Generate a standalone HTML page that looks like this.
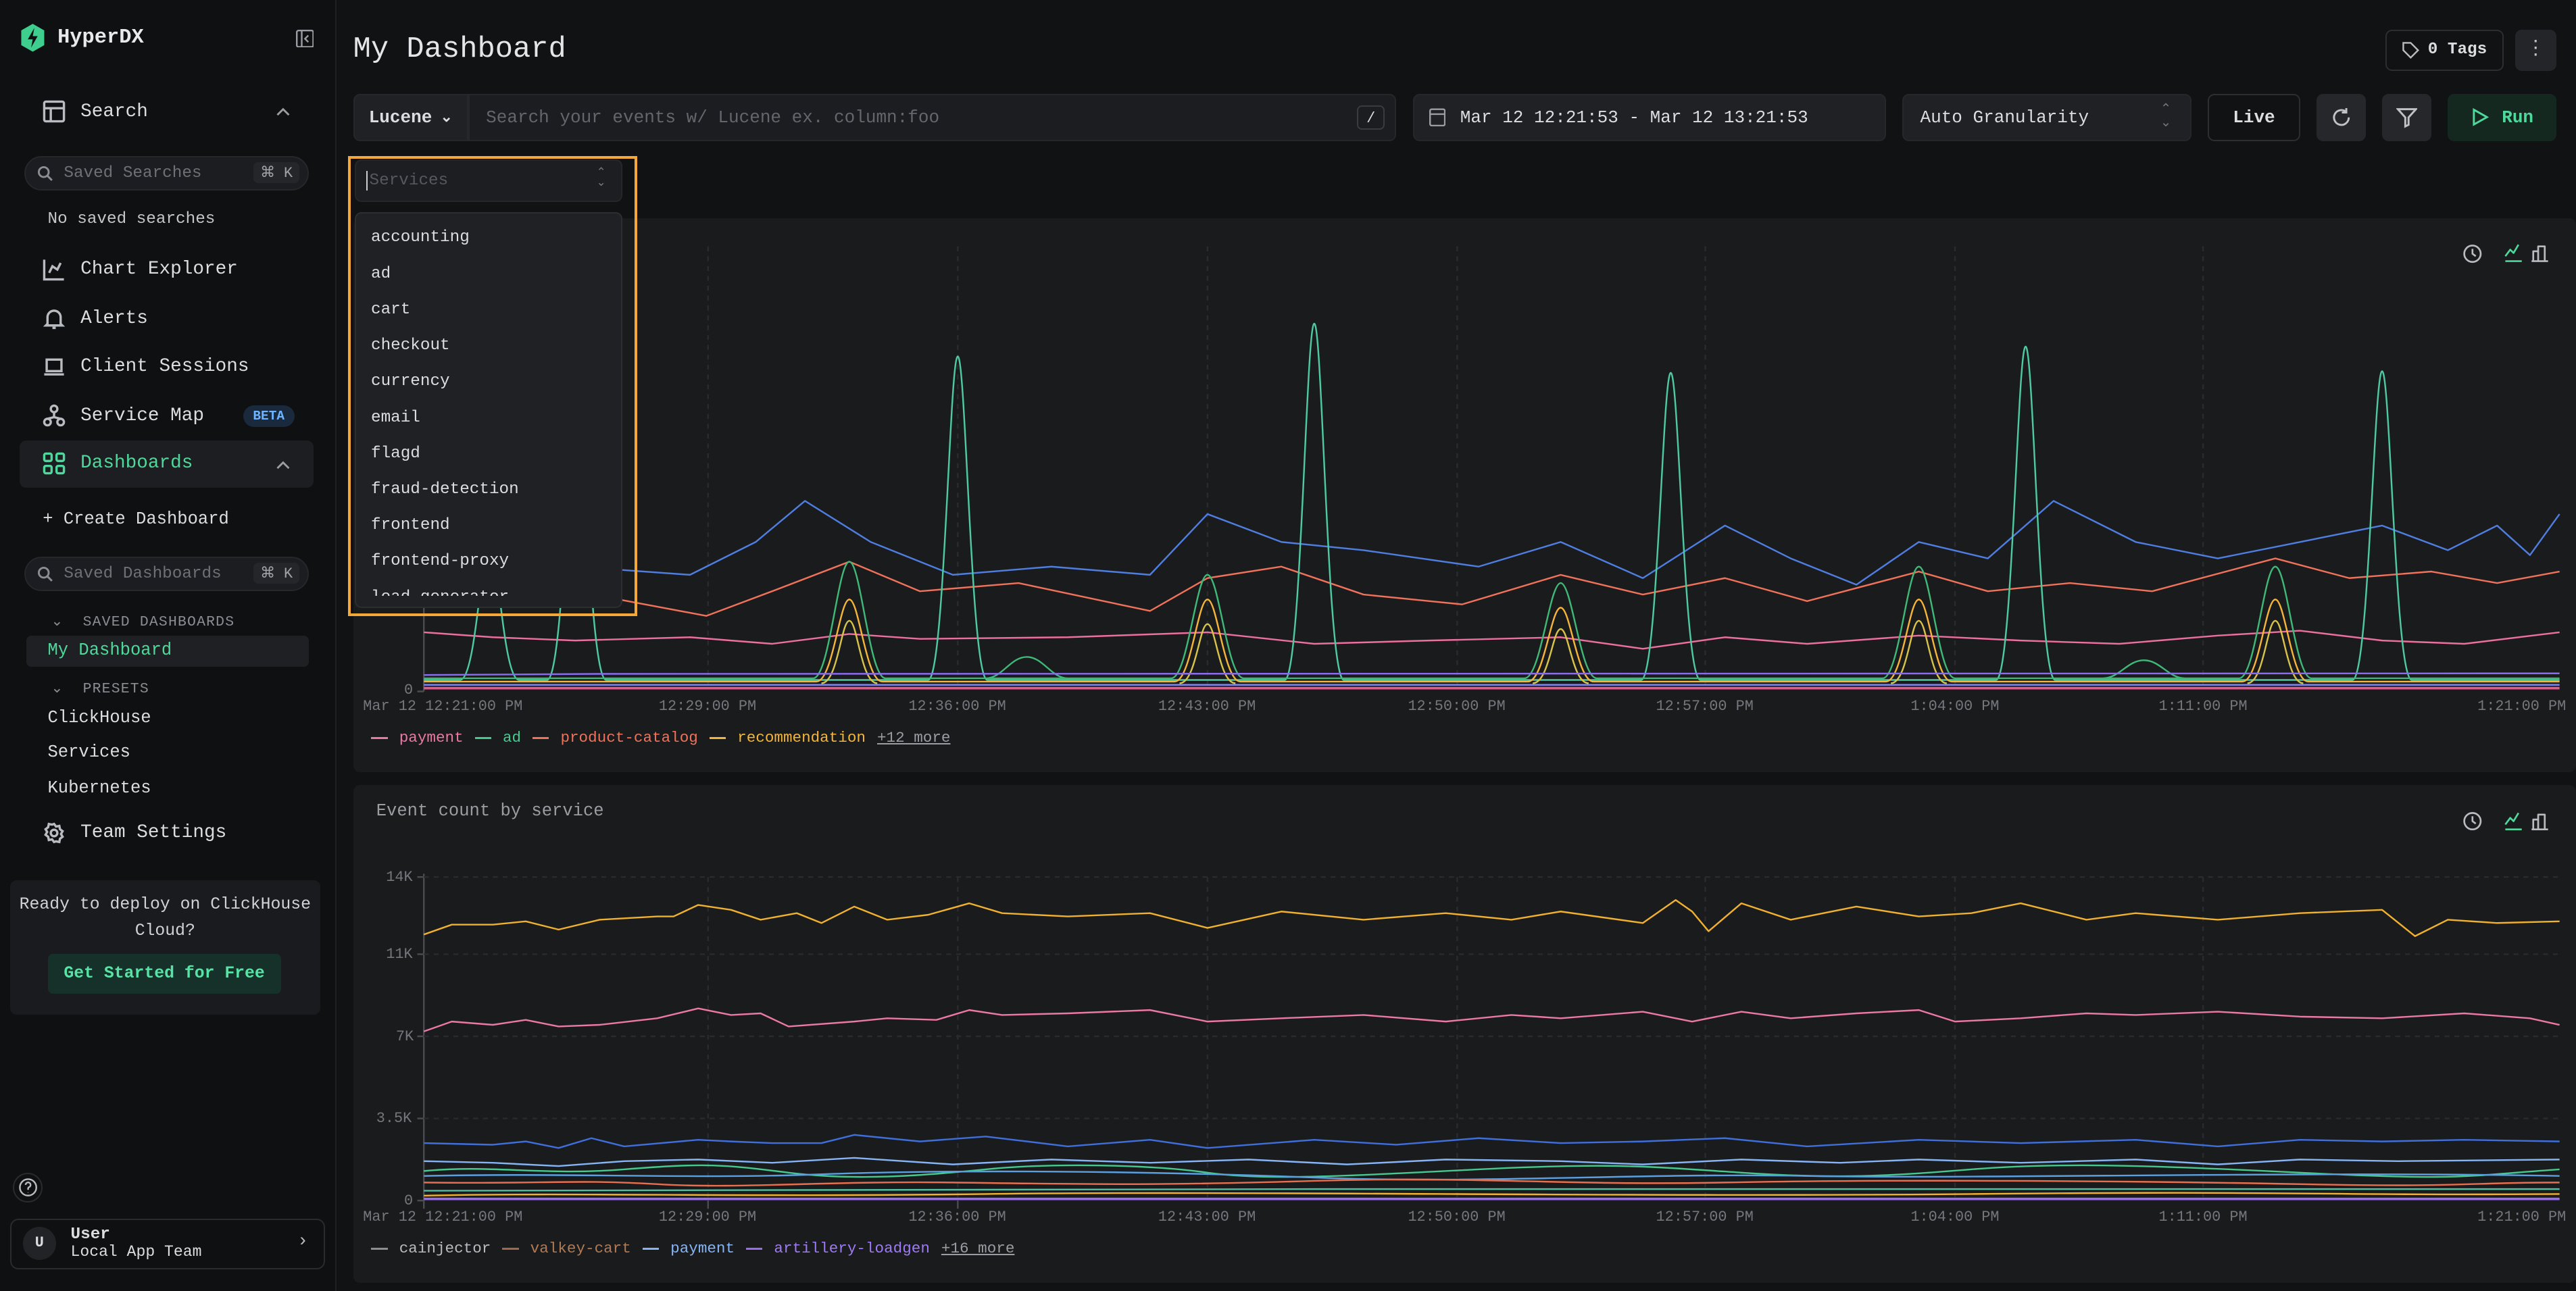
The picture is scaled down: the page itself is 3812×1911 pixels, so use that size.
<!DOCTYPE html>
<html><head><meta charset="utf-8"><style>
html,body{margin:0;padding:0;background:#111214;}
body{zoom:2.4311;width:1568px;height:786px;position:relative;overflow:hidden;font-family:"Liberation Mono",monospace;color:#dcdde0;}
.a{position:absolute;white-space:nowrap;}
.side{position:absolute;left:0;top:0;width:204px;height:786px;background:#0f1012;border-right:1px solid #1f2023;}
.nav{position:absolute;left:26px;font-size:11.4px;color:#dcdde0;display:flex;align-items:center;gap:9px;}
.ic{width:14px;height:14px;stroke:#b8bbc0;fill:none;stroke-width:1.4}
.pill{position:absolute;left:15px;width:173px;height:21px;border-radius:11px;background:#1c1d20;border:1px solid #26272b;box-sizing:border-box;font-size:10px;color:#6d7076;}
.kbd{position:absolute;right:5px;top:3px;background:#25262a;border-radius:3px;font-size:9px;padding:1px 4px;color:#a0a3a8}
.small{font-size:10.5px;color:#dcdde0;}
.btn{position:absolute;top:57px;height:29px;border-radius:4px;background:#202124;border:1px solid #26272b;box-sizing:border-box;font-size:10.7px;display:flex;align-items:center;justify-content:center;}
.panel{position:absolute;left:215px;width:1353px;background:#1a1b1d;border-radius:4px;}
.lbl{position:absolute;font-size:9px;color:#74777c;}
.leg{position:absolute;left:226px;font-size:9.3px;display:flex;align-items:center;}
.leg i{display:inline-block;width:10px;height:1.5px;margin:0 7px 0 0;}
.leg span{margin-right:7px}
</style></head><body>

<div class="side">
  <svg class="a" style="left:12px;top:14px" width="16" height="18" viewBox="0 0 16 18"><path d="M8 0.5 L15 4.5 L15 13.5 L8 17.5 L1 13.5 L1 4.5Z" fill="#3ecf8e"/><path d="M9 3 L5 10 L8 10 L7 15 L11 8 L8 8Z" fill="#0f1012"/></svg>
  <div class="a" style="left:35px;top:16px;font-size:12.5px;font-weight:bold;color:#e8e9eb">HyperDX</div>
  <svg class="a" style="left:180px;top:18px" width="11" height="11" viewBox="0 0 11 11"><rect x="0.5" y="0.5" width="10" height="10" rx="1" fill="none" stroke="#9a9da2"/><path d="M3.5 0.5 V10.5 M7.5 3.5 L5.5 5.5 L7.5 7.5" stroke="#9a9da2" fill="none"/></svg>

  <div class="nav" style="top:61px"><svg class="ic" viewBox="0 0 14 14"><rect x="1" y="1" width="12" height="12" rx="1"/><path d="M1 5H13M5 5V13"/></svg>Search</div>
  <svg class="a" style="left:168px;top:65px" width="9" height="6" viewBox="0 0 9 6"><path d="M1 5L4.5 1.5L8 5" stroke="#9a9da2" fill="none" stroke-width="1.2"/></svg>
  <div class="pill" style="top:95px"><svg class="a" style="left:7px;top:5px" width="10" height="10" viewBox="0 0 10 10"><circle cx="4" cy="4" r="3" fill="none" stroke="#8a8d93" stroke-width="1.2"/><path d="M6.3 6.3L9 9" stroke="#8a8d93" stroke-width="1.2"/></svg><span class="a" style="left:23px;top:4px">Saved Searches</span><span class="kbd">⌘ K</span></div>
  <div class="a" style="left:29px;top:128px;font-size:10px;color:#c4c6ca">No saved searches</div>

  <div class="nav" style="top:157px"><svg class="ic" viewBox="0 0 14 14"><path d="M1 1V13H13M4 9L6 5L9 7L11 3"/></svg>Chart Explorer</div>
  <div class="nav" style="top:187px"><svg class="ic" viewBox="0 0 14 14"><path d="M3 10V6a4 4 0 0 1 8 0v4l1 1H2z M6 12.5h2"/></svg>Alerts</div>
  <div class="nav" style="top:216px"><svg class="ic" viewBox="0 0 14 14"><rect x="2.5" y="3" width="9" height="7"/><path d="M1 12H13"/></svg>Client Sessions</div>
  <div class="nav" style="top:246px"><svg class="ic" viewBox="0 0 14 14"><circle cx="7" cy="3" r="2"/><circle cx="3" cy="11" r="2"/><circle cx="11" cy="11" r="2"/><path d="M7 5V8M3 9L7 8L11 9"/></svg>Service Map</div>
  <div class="a" style="left:148px;top:247px;background:#1a2a3c;color:#6cb4ff;font-size:8px;font-weight:bold;padding:2px 6px;border-radius:8px">BETA</div>
  <div class="a" style="left:12px;top:268px;width:179px;height:29px;background:#1d1e21;border-radius:4px"></div>
  <div class="nav" style="top:275px;color:#4fd89c"><svg class="ic" viewBox="0 0 14 14" style="stroke:#4fd89c"><rect x="1" y="1" width="4.5" height="4.5" rx="1"/><rect x="8.5" y="1" width="4.5" height="4.5" rx="1"/><rect x="1" y="8.5" width="4.5" height="4.5" rx="1"/><rect x="8.5" y="8.5" width="4.5" height="4.5" rx="1"/></svg>Dashboards</div>
  <svg class="a" style="left:168px;top:280px" width="9" height="6" viewBox="0 0 9 6"><path d="M1 5L4.5 1.5L8 5" stroke="#9a9da2" fill="none" stroke-width="1.2"/></svg>
  <div class="a small" style="left:26px;top:310px">+ Create Dashboard</div>
  <div class="pill" style="top:339px"><svg class="a" style="left:7px;top:5px" width="10" height="10" viewBox="0 0 10 10"><circle cx="4" cy="4" r="3" fill="none" stroke="#8a8d93" stroke-width="1.2"/><path d="M6.3 6.3L9 9" stroke="#8a8d93" stroke-width="1.2"/></svg><span class="a" style="left:23px;top:4px">Saved Dashboards</span><span class="kbd">⌘ K</span></div>
  <div class="a" style="left:31px;top:373px;font-size:8.8px;color:#8a8d93;letter-spacing:0.5px">⌄&nbsp; SAVED DASHBOARDS</div>
  <div class="a" style="left:16px;top:387px;width:172px;height:19px;background:#1f2023;border-radius:3px"></div>
  <div class="a small" style="left:29px;top:390px;color:#4fd89c">My Dashboard</div>
  <div class="a" style="left:31px;top:414px;font-size:8.8px;color:#8a8d93;letter-spacing:0.5px">⌄&nbsp; PRESETS</div>
  <div class="a small" style="left:29px;top:431px">ClickHouse</div>
  <div class="a small" style="left:29px;top:452px">Services</div>
  <div class="a small" style="left:29px;top:474px">Kubernetes</div>
  <div class="nav" style="top:500px"><svg class="ic" viewBox="0 0 14 14"><circle cx="7" cy="7" r="2"/><path d="M7 1.5l1.2 1.6 2-.4.4 2 1.6 1.2-1 1.7 1 1.7-1.6 1.2-.4 2-2-.4L7 12.5l-1.2-1.6-2 .4-.4-2L1.8 8.1l1-1.7-1-1.7 1.6-1.2.4-2 2 .4z"/></svg>Team Settings</div>

  <div class="a" style="left:6px;top:536px;width:189px;height:82px;background:#1a1b1e;border-radius:4px"></div>
  <div class="a" style="left:6px;top:543px;width:189px;text-align:center;font-size:10.2px;line-height:16px;white-space:normal;color:#d0d2d6">Ready to deploy on ClickHouse Cloud?</div>
  <div class="a" style="left:29px;top:581px;width:142px;height:24px;background:#16302a;border-radius:3px;color:#57e3a5;font-weight:bold;font-size:10.2px;text-align:center;line-height:24px">Get Started for Free</div>

  <div class="a" style="left:8px;top:714px;width:18px;height:18px;border-radius:50%;border:1px solid #2a2b2f;box-sizing:border-box"></div>
  <svg class="a" style="left:11px;top:717px" width="12" height="12" viewBox="0 0 12 12"><circle cx="6" cy="6" r="5" fill="none" stroke="#b8bbc0"/><path d="M4.5 4.5a1.5 1.5 0 1 1 2 1.4c-.4.2-.5.5-.5 1V7.5M6 9v.2" fill="none" stroke="#b8bbc0"/></svg>
  <div class="a" style="left:6px;top:742px;width:192px;height:31px;border:1px solid #2a2b2f;border-radius:5px;box-sizing:border-box"></div>
  <div class="a" style="left:14px;top:747px;width:20px;height:20px;border-radius:50%;background:#222326;font-size:9px;font-weight:bold;text-align:center;line-height:20px">U</div>
  <div class="a" style="left:43px;top:746px;font-size:10px;font-weight:bold">User</div>
  <div class="a" style="left:43px;top:757px;font-size:9.5px">Local App Team</div>
  <div class="a" style="left:181px;top:750px;font-size:11px;color:#b8bbc0">›</div>
</div>

<!-- header -->
<div class="a" style="left:215px;top:20px;font-size:18px;color:#e4e5e8">My Dashboard</div>
<div class="a" style="left:1452px;top:18px;width:72px;height:25px;border:1px solid #2d2e32;border-radius:4px;box-sizing:border-box;font-size:10px;font-weight:bold;line-height:23px;padding-left:25px">0 Tags</div>
<svg class="a" style="left:1462px;top:25px" width="11" height="11" viewBox="0 0 11 11"><path d="M1 1H5.5L10 5.5L5.5 10L1 5.5Z" fill="none" stroke="#b8bbc0"/></svg>
<div class="a" style="left:1531px;top:18px;width:25px;height:25px;background:#242528;border-radius:4px;text-align:center;font-size:12px;line-height:24px;color:#c0c2c6">⋮</div>

<div class="btn" style="left:215px;width:70px;font-weight:bold;border-radius:4px 0 0 4px">Lucene <span style="font-size:9px;margin-left:5px">⌄</span></div>
<div class="btn" style="left:285px;width:565px;justify-content:flex-start;padding-left:10px;color:#63666c;border-radius:0 4px 4px 0;background:#1c1d20">Search your events w/ Lucene ex. column:foo</div>
<div class="a" style="left:826px;top:64px;width:17px;height:15px;border:1px solid #3a3b3f;border-radius:3px;font-size:9px;text-align:center;line-height:15px;box-sizing:border-box">/</div>
<div class="btn" style="left:860px;width:288px;justify-content:flex-start;padding-left:28px">Mar 12 12:21:53 - Mar 12 13:21:53</div>
<svg class="a" style="left:870px;top:65px" width="10" height="12" viewBox="0 0 10 12"><rect x="0.5" y="1.5" width="9" height="10" rx="1" fill="none" stroke="#9a9da2"/><path d="M0.5 4.5H9.5" stroke="#9a9da2"/></svg>
<div class="btn" style="left:1158px;width:176px;justify-content:flex-start;padding-left:10px">Auto Granularity</div>
<div class="a" style="left:1315px;top:63px;font-size:8px;color:#74777c;line-height:8px">⌃<br>⌄</div>
<div class="btn" style="left:1344px;width:56px;background:#111214;border-color:#2d2e32;font-weight:bold">Live</div>
<div class="btn" style="left:1410px;width:30px;background:#26272a"><svg width="13" height="13" viewBox="0 0 13 13"><path d="M11 6.5A4.5 4.5 0 1 1 9.5 3.2M9.5 0.8V3.5H6.8" fill="none" stroke="#c0c2c6" stroke-width="1.2"/></svg></div>
<div class="btn" style="left:1450px;width:30px;background:#26272a"><svg width="13" height="13" viewBox="0 0 13 13"><path d="M1 1.5H12L7.5 6.5V11L5.5 12V6.5Z" fill="none" stroke="#c0c2c6" stroke-width="1.2"/></svg></div>
<div class="btn" style="left:1490px;width:66px;background:#15281f;border-color:#15281f;color:#4fd89c;font-weight:bold"><svg width="11" height="11" viewBox="0 0 11 11" style="margin-right:8px"><path d="M2 1L10 5.5L2 10Z" fill="none" stroke="#4fd89c" stroke-width="1.2"/></svg>Run</div>

<!-- panels -->
<div class="panel" style="top:133px;height:337px"></div>
<div class="panel" style="top:478px;height:303px"></div>
<div class="a" style="left:229px;top:143px;font-size:10.5px;color:#9a9da2">Event count by service</div>
<div class="a" style="left:229px;top:488px;font-size:10.5px;color:#9a9da2">Event count by service</div>

<svg class="a" style="left:0;top:0" width="1568" height="786" viewBox="0 0 1568 786" fill="none" stroke-linejoin="round">
  <g stroke="#b8bbc0" stroke-width="1.1">
    <circle cx="1505" cy="154.5" r="5"/><path d="M1505 151.5V154.5L1507 156"/>
    <circle cx="1505" cy="500" r="5"/><path d="M1505 497V500L1507 501.5"/>
    <path d="M1542 159V153H1545V159M1545 159V150H1549V159M1541 159H1551"/>
    <path d="M1542 505V499H1545V505M1545 505V496H1549V505M1541 505H1551"/>
  </g>
  <g stroke="#4fd89c" stroke-width="1.1"><path d="M1525 156L1528 152L1530 154L1533 149M1525 159H1535"/><path d="M1525 502L1528 498L1530 500L1533 495M1525 505H1535"/></g>
  <path d="M258 145V421M254 421H258" stroke="#4a4c50"/>
  <g stroke="#2a2b2e" stroke-dasharray="3 3"><path d="M431 150V420M583 150V420M735 150V420M887 150V420M1038 150V420M1190 150V420M1341 150V420"/></g>
  <polyline stroke="#4f7ee0" stroke-width="1" points="258,335 300,328 350,345 420,350 460,330 490,305 530,330 580,350 640,345 700,350 735,313 780,330 830,335 900,345 950,330 1000,352 1050,320 1090,340 1130,356 1168,330 1210,340 1250,305 1300,330 1350,340 1400,330 1450,320 1490,335 1520,320 1540,338 1558,313"/>
  <polyline stroke="#f0725a" stroke-width="1" points="258,355 300,345 350,360 430,375 470,360 517,342 560,360 620,355 700,372 735,352 780,345 830,362 890,368 950,350 1000,362 1050,352 1100,366 1168,348 1210,360 1260,355 1310,360 1385,340 1430,352 1480,348 1520,355 1558,348"/>
  <polyline stroke="#ec6f9f" stroke-width="1" points="258,385 300,388 350,390 420,388 470,392 517,386 560,389 650,388 735,385 800,392 870,390 950,388 1000,395 1050,388 1100,392 1168,387 1230,390 1290,392 1350,387 1400,384 1450,390 1500,392 1558,385"/>
  <path stroke="#4ec9a0" stroke-width="1" d="M258 414 L280 414 C290 414 293 330 298 330 C303 330 306 414 316 414 L333 414 C343 414 346 250 351 250 C356 250 359 414 369 414 L565 414 C575 414 578 217 583 217 C588 217 591 414 601 414 L782 414 C792 414 795 197 800 197 C805 197 808 414 818 414 L999 414 C1009 414 1012 227 1017 227 C1022 227 1025 414 1035 414 L1215 414 C1225 414 1228 211 1233 211 C1238 211 1241 414 1251 414 L1432 414 C1442 414 1445 226 1450 226 C1455 226 1458 414 1468 414 L1558 414"/>
  <path stroke="#3fb878" stroke-width="1" d="M258 413 L495 413 C505 413 510 342 517 342 C524 342 529 413 539 413 L713 413 C723 413 728 350 735 350 C742 350 747 413 757 413 L928 413 C938 413 943 355 950 355 C957 355 962 413 972 413 L1146 413 C1156 413 1161 345 1168 345 C1175 345 1180 413 1190 413 L1363 413 C1373 413 1378 345 1385 345 C1392 345 1397 413 1407 413 L1558 413 M600 413 C610 413 615 400 625 400 C635 400 640 413 650 413 M1280 413 C1290 413 1295 402 1305 402 C1315 402 1320 413 1330 413"/>
  <path stroke="#f5b53a" stroke-width="1" d="M258 415 L497 415 C507 415 511 365 517 365 C523 365 527 415 537 415 L715 415 C725 415 729 365 735 365 C741 365 745 415 755 415 L930 415 C940 415 944 370 950 370 C956 370 960 415 970 415 L1148 415 C1158 415 1162 365 1168 365 C1174 365 1178 415 1188 415 L1365 415 C1375 415 1379 365 1385 365 C1391 365 1395 415 1405 415 L1558 415"/>
  <path stroke="#d8c24a" stroke-width="1" d="M500 416 C510 416 512 378 517 378 C522 378 524 416 534 416 M718 416 C728 416 730 380 735 380 C740 380 742 416 752 416 M933 416 C943 416 945 383 950 383 C955 383 957 416 967 416 M1151 416 C1161 416 1163 378 1168 378 C1173 378 1175 416 1185 416 M1368 416 C1378 416 1380 378 1385 378 C1390 378 1392 416 1402 416"/>
  <path stroke="#7e88f0" stroke-width="1" d="M258 417H1558"/><path stroke="#e05a8a" stroke-width="1.5" d="M258 419H1558"/><path stroke="#8a6cf0" d="M258 411 C600 408 900 413 1558 410"/>
  <path d="M258 532V731M254 731H258M254 534H258M254 581H258M254 631H258M254 681H258M258 731V736M431 731V736M583 731V736" stroke="#4a4c50"/>
  <g stroke="#2a2b2e" stroke-dasharray="3 3"><path d="M258 534H1558M258 581H1558M258 631H1558M258 681H1558M431 534V731M583 534V731M735 534V731M887 534V731M1038 534V731M1190 534V731M1341 534V731"/></g>
  <polyline stroke="#f0b030" stroke-width="1" points="258,569 275,563 300,563 320,561 340,566 365,560 400,558 410,558 425,551 445,554 463,560 485,556 500,562 520,552 540,560 565,557 590,550 610,556 650,558 700,556 735,565 780,555 830,560 880,556 920,560 950,555 1000,562 1020,548 1030,555 1040,567 1060,550 1090,560 1130,552 1168,558 1200,556 1230,550 1270,560 1300,556 1350,560 1400,556 1450,554 1470,570 1490,560 1520,562 1558,561"/>
  <polyline stroke="#ec78a5" stroke-width="1" points="258,628 275,622 300,624 320,621 340,625 365,624 400,620 425,614 445,618 463,617 480,625 520,622 540,620 570,621 590,615 610,618 650,617 700,615 735,622 780,620 830,618 880,622 920,618 950,620 1000,616 1030,622 1060,616 1090,620 1130,617 1168,615 1190,622 1230,620 1270,617 1300,618 1350,616 1400,619 1450,620 1500,617 1540,620 1558,624"/>
  <polyline stroke="#3f6fdb" stroke-width="1" points="258,696 300,697 320,695 340,699 360,693 380,698 425,694 445,695 470,696 500,696 520,691 560,695 600,692 650,698 700,694 735,699 800,694 850,697 900,693 950,696 1000,695 1050,693 1100,698 1168,694 1230,696 1300,694 1350,698 1400,694 1450,695 1500,694 1558,695"/>
  <polyline stroke="#86b4f5" stroke-width="1" points="258,707 300,708 340,710 380,707 425,706 470,708 520,705 580,709 640,706 700,708 760,706 820,709 880,706 950,707 1000,709 1060,706 1120,708 1168,706 1230,708 1300,706 1350,709 1400,706 1460,707 1558,706"/>
  <path stroke="#46c98f" stroke-width="1" d="M258 713 C300 709 330 716 380 712 S440 709 480 714 S560 716 600 712 S700 709 735 714 S820 716 900 712 S1000 710 1060 714 S1150 716 1200 712 S1300 709 1400 714 S1500 716 1558 712"/>
  <path stroke="#5aa0e0" stroke-width="1" d="M258 716 C350 714 420 718 500 715 S700 713 800 717 S1000 714 1100 716 S1400 713 1558 716"/>
  <path stroke="#e86e4e" stroke-width="1" d="M258 720 C330 721 350 718 400 721 S500 719 580 720 S700 722 800 719 S950 722 1050 720 S1300 719 1400 721 S1500 720 1558 720"/>
  <path stroke="#4fbfa0" stroke-width="1" d="M258 725 C400 724 600 726 800 724 S1200 725 1558 724"/>
  <path stroke="#f0b030" stroke-width="1" d="M258 728 C350 726 450 729 600 727 S1000 729 1200 727 S1400 728 1558 727"/>
  <path stroke="#9a6cf0" stroke-width="1.5" d="M258 730H1558"/>
</svg>

<div class="lbl" style="left:246px;top:415px">0</div>
<div class="lbl" style="left:221px;top:425px">Mar 12 12:21:00 PM</div>
<div class="lbl" style="left:401px;top:425px">12:29:00 PM</div>
<div class="lbl" style="left:553px;top:425px">12:36:00 PM</div>
<div class="lbl" style="left:705px;top:425px">12:43:00 PM</div>
<div class="lbl" style="left:857px;top:425px">12:50:00 PM</div>
<div class="lbl" style="left:1008px;top:425px">12:57:00 PM</div>
<div class="lbl" style="left:1163px;top:425px">1:04:00 PM</div>
<div class="lbl" style="left:1314px;top:425px">1:11:00 PM</div>
<div class="lbl" style="left:1508px;top:425px">1:21:00 PM</div>
<div class="leg" style="top:444px"><i style="background:#ec78a5"></i><span style="color:#ec78a5">payment</span><i style="background:#46c98f"></i><span style="color:#46c98f">ad</span><i style="background:#f0725a"></i><span style="color:#f0725a">product-catalog</span><i style="background:#f5b53a"></i><span style="color:#f5b53a">recommendation</span><span style="color:#9a9da2;text-decoration:underline">+12 more</span></div>

<div class="lbl" style="left:235px;top:529px">14K</div>
<div class="lbl" style="left:235px;top:576px">11K</div>
<div class="lbl" style="left:241px;top:626px">7K</div>
<div class="lbl" style="left:229px;top:676px">3.5K</div>
<div class="lbl" style="left:246px;top:726px">0</div>
<div class="lbl" style="left:221px;top:736px">Mar 12 12:21:00 PM</div>
<div class="lbl" style="left:401px;top:736px">12:29:00 PM</div>
<div class="lbl" style="left:553px;top:736px">12:36:00 PM</div>
<div class="lbl" style="left:705px;top:736px">12:43:00 PM</div>
<div class="lbl" style="left:857px;top:736px">12:50:00 PM</div>
<div class="lbl" style="left:1008px;top:736px">12:57:00 PM</div>
<div class="lbl" style="left:1163px;top:736px">1:04:00 PM</div>
<div class="lbl" style="left:1314px;top:736px">1:11:00 PM</div>
<div class="lbl" style="left:1508px;top:736px">1:21:00 PM</div>
<div class="leg" style="top:755px"><i style="background:#8a8d93"></i><span style="color:#b8bbc0">cainjector</span><i style="background:#a06a4a"></i><span style="color:#b07a55">valkey-cart</span><i style="background:#86b4f5"></i><span style="color:#86b4f5">payment</span><i style="background:#9a6cf0"></i><span style="color:#a07af5">artillery-loadgen</span><span style="color:#9a9da2;text-decoration:underline">+16 more</span></div>

<div class="a" style="left:216px;top:96px;width:164px;height:28px;background:#111214"></div>
<div class="a" style="left:216px;top:97px;width:163px;height:26px;background:#1d1e21;border:1px solid #26272b;border-radius:4px;box-sizing:border-box"></div>
<div class="a" style="left:223px;top:104px;font-size:10px;color:#55585e;border-left:1px solid #ccc;padding-left:1px;line-height:12px">Services</div>
<div class="a" style="left:363px;top:103px;font-size:7px;color:#74777c;line-height:6px">⌃<br>⌄</div>
<div class="a" style="left:216px;top:129px;width:163px;height:241px;background:#202124;border:1px solid #2d2e32;border-radius:4px;box-sizing:border-box;overflow:hidden">
  <div style="position:relative;height:233px;overflow:hidden;font-size:10px;line-height:21.9px;padding:4px 0 0 9px;box-sizing:border-box;color:#dcdde0">accounting<br>ad<br>cart<br>checkout<br>currency<br>email<br>flagd<br>fraud-detection<br>frontend<br>frontend-proxy<br>load-generator</div>
</div>
<div class="a" style="left:212px;top:95px;width:176px;height:280px;border:2px solid #f5a83a;box-sizing:border-box"></div>
</body></html>
